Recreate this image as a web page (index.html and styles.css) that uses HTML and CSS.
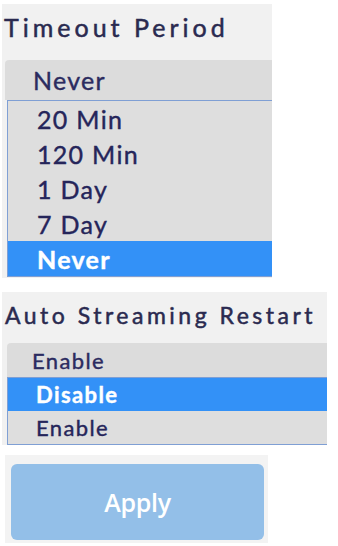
FILE: index.html
```html
<!DOCTYPE html>
<html>
<head>
<meta charset="utf-8">
<link rel="stylesheet" href="styles.css">
</head>
<body>
<div class="page">
  <section class="panel panel-timeout">
    <div class="title">Timeout Period</div>
    <div class="select">Never</div>
    <ul class="list">
      <li class="opt">20 Min</li>
      <li class="opt">120 Min</li>
      <li class="opt">1 Day</li>
      <li class="opt">7 Day</li>
      <li class="opt sel">Never</li>
    </ul>
  </section>
  <section class="panel panel-stream">
    <div class="title">Auto Streaming Restart</div>
    <div class="select">Enable</div>
    <ul class="list">
      <li class="opt sel">Disable</li>
      <li class="opt">Enable</li>
    </ul>
  </section>
  <section class="panel panel-apply">
    <button class="apply">Apply</button>
  </section>
</div>
</body>
</html>
```
FILE: styles.css
```css
html, body {
  margin: 0;
  padding: 0;
  background: #ffffff;
}
body {
  font-family: "Lato", "DejaVu Sans", sans-serif;
  color: #28285a;
}
.page {
  display: flex;
  flex-direction: column;
  align-items: flex-start;
}
.panel {
  background: #f1f1f1;
  box-sizing: border-box;
}
.panel-timeout {
  margin: 4px 0 0 2px;
  width: 270px;
  height: 274px;
  display: flex;
  flex-direction: column;
}
.title {
  font-size: 25px;
  letter-spacing: 4px;
  color: #2a2a50;
  -webkit-text-stroke: 0.5px #2a2a50;
  display: flex;
  align-items: center;
  white-space: nowrap;
  box-sizing: border-box;
}
.panel-timeout .title {
  height: 56px;
  padding-left: 2px;
  padding-bottom: 10px;
}
.select {
  background: #dcdcdc;
  border-top-left-radius: 4px;
  display: flex;
  align-items: center;
  font-size: 25px;
  letter-spacing: 1.3px;
  color: #2b2b60;
  -webkit-text-stroke: 0.4px #2b2b60;
}
.panel-timeout .select {
  height: 40px;
  margin-left: 3px;
  padding-left: 28px;
}
.list {
  list-style: none;
  margin: 0;
  padding: 0;
  background: #dedede;
  border: 1px solid #7f9fd4;
  border-right: none;
}
.panel-timeout .list {
  margin-left: 5px;
}
.opt {
  display: flex;
  align-items: center;
  font-size: 25px;
  letter-spacing: 1.3px;
  color: #25255a;
  -webkit-text-stroke: 0.4px #25255a;
}
.panel-timeout .opt {
  height: 35px;
  padding-left: 29px;
}
.opt.sel {
  background: #3391f7;
  color: #ffffff;
  -webkit-text-stroke: 0.4px #ffffff;
  font-weight: bold;
}
.panel-stream {
  margin: 14px 0 0 2px;
  width: 325px;
  display: flex;
  flex-direction: column;
}
.panel-stream .title {
  height: 51px;
  padding-left: 3px;
  padding-bottom: 6px;
  font-size: 23px;
  letter-spacing: 3.5px;
}
.panel-stream .select {
  height: 34px;
  margin-left: 5px;
  padding-left: 25px;
  font-size: 22px;
  letter-spacing: 1.4px;
}
.panel-stream .list {
  margin-left: 5px;
}
.panel-stream .opt {
  height: 33px;
  padding-left: 28px;
  font-size: 22px;
  letter-spacing: 1.4px;
}
.panel-apply {
  margin: 10px 0 0 5px;
  width: 263px;
  height: 88px;
  padding: 9px 4px 3px 6px;
  background: #f3f3f3;
}
.apply {
  width: 100%;
  height: 76px;
  border: none;
  border-radius: 6px;
  background: #93bfe8;
  color: #ffffff;
  font-family: "Open Sans", "Liberation Sans", sans-serif;
  font-weight: 600;
  font-size: 25px;
  letter-spacing: -0.3px;
  padding: 0;
}
```
